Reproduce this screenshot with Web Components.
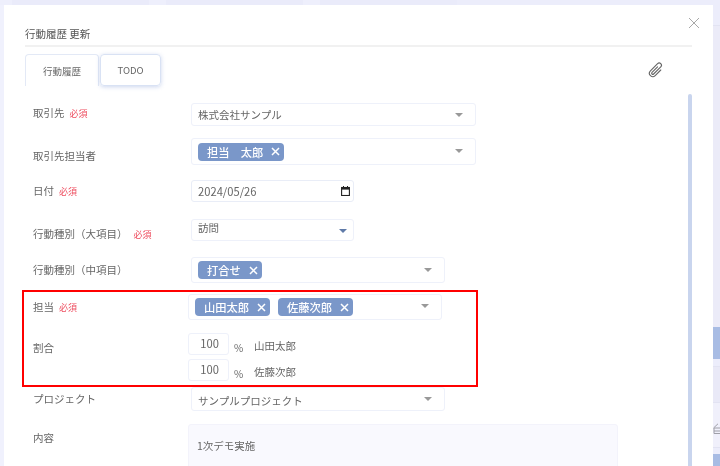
<!DOCTYPE html>
<html lang="ja">
<head>
<meta charset="utf-8">
<title>行動履歴 更新</title>
<style>
html,body{margin:0;padding:0;height:466px;overflow:hidden;background:#ecedfb}
body{font-family:"Noto Sans CJK JP","Noto Sans",sans-serif;color:#666}
</style>
</head>
<body>
<modal-page>
  <span slot="title">行動履歴 更新</span>

  <form-row label="取引先" req="1" style="--h:35px;--lt:3px">
    <pick-box style="--w:285px;--bh:23px"><span class="t">株式会社サンプル</span></pick-box>
  </form-row>
  <form-row label="取引先担当者" style="--h:42px;--lt:11px">
    <pick-box style="--w:285px;--bh:27px;--pad:6px;--at:-1px"><tag-pill>担当　太郎</tag-pill></pick-box>
  </form-row>
  <form-row label="日付" req="1" style="--h:39px;--lt:4px">
    <date-box>2024/05/26</date-box>
  </form-row>
  <form-row label="行動種別（大項目）" req="1" req-gap="6" style="--h:38px;--lt:8px">
    <pick-box style="--w:163px;--bh:22px;--ac:#5f7aa8;--tt:-3px;--at:1px;--ar:6px">訪問</pick-box>
  </form-row>
  <form-row label="行動種別（中項目）" style="--h:33px;--lt:6px">
    <pick-box style="--w:254px;--bh:26px;--pad:6px"><tag-pill>打合せ</tag-pill></pick-box>
  </form-row>

  <mark-box>
    <form-row label="担当" req="1" style="--h:39px;--lt:6px;--lw:155px">
      <pick-box style="--w:254px;--bh:26px;--pad:6px;--gap:8px;--at:-1px"><tag-pill>山田太郎</tag-pill><tag-pill>佐藤次郎</tag-pill></pick-box>
    </form-row>
    <form-row label="割合" style="--h:54px;--lt:8px;--lw:155px">
      <rate-list>
        <rate-line name="山田太郎">100</rate-line>
        <rate-line name="佐藤次郎">100</rate-line>
      </rate-list>
    </form-row>
  </mark-box>

  <form-row label="プロジェクト" style="--h:37px;--lt:5px">
    <pick-box style="--w:254px;--bh:24px;--tt:1px">サンプルプロジェクト</pick-box>
  </form-row>
  <form-row label="内容" style="--h:60px;--lt:7px;--lw:155px">
    <memo-box>1次デモ実施</memo-box>
  </form-row>
</modal-page>

<script>
const modalTpl = document.createElement('template');
modalTpl.innerHTML = `<style>
:host{display:grid;grid-template-columns:4px 709px 7px;grid-template-rows:5px 461px;width:720px;height:466px;overflow:hidden;filter:blur(.3px)}
.top{grid-column:1 / 4;display:flex;background:#ecedfb}
.top i{display:block;height:5px;background:#eeeffc}
.left{background:#f0f1fd}
.right{display:flex;flex-direction:column;background:#ecedfb;overflow:hidden}
.right i{display:block;flex:none}
.right svg{display:block;width:7px;height:11px;margin-top:20px}
.modal{position:relative;background:#fff;padding:21px 21px 0;box-sizing:border-box;overflow:hidden}
.title{height:16px;line-height:16px;font-size:10.5px;color:#555;padding-bottom:3px;border-bottom:2px solid #f1f1f1;width:667px}
.close{position:absolute;left:685px;top:13px;width:10px;height:10px}
.bar{display:flex;align-items:flex-start;justify-content:space-between;width:667px;margin-top:7px;height:32px}
.tabs{display:flex;gap:1px}
.tab{height:32px;box-sizing:border-box;display:flex;align-items:center;justify-content:center;font-size:9.5px;color:#666;border:1px solid #e3e9f6;border-radius:4px}
.tab.on{width:74px;border-bottom:none;border-radius:4px 4px 0 0}
.tab.off{width:61px;border-color:#d9e2f4;box-shadow:0 1px 4px rgba(130,155,215,.4)}
.clip{width:18px;height:18px;margin:7px 27px 0 0;transform:rotate(45deg)}
.body{display:flex;justify-content:space-between;width:667px;margin-top:8px}
.form{padding:9px 0 0 8px;width:650px;box-sizing:border-box}
.thumb{width:4px;height:380px;background:#c9d5ee;border-radius:2px 2px 0 0}
</style>
<div class="top">
  <i style="width:12px"></i><i style="width:137px;background:#eaebfa"></i><i style="width:17px"></i><i style="width:137px;background:#eaebfa"></i><i style="width:17px"></i><i style="width:137px;background:#eaebfa"></i>
</div>
<div class="left"></div>
<div class="modal">
  <div class="title"><slot name="title"></slot></div>
  <svg class="close" viewBox="0 0 10 10" fill="none" stroke="#a8a8a8" stroke-width="1"><path d="M0 0l10 10M10 0L0 10"/></svg>
  <div class="bar">
    <div class="tabs"><div class="tab on">行動履歴</div><div class="tab off">TODO</div></div>
    <svg class="clip" viewBox="0 0 16 16" fill="#666"><path d="M4.5 3a2.5 2.5 0 0 1 5 0v9a1.5 1.5 0 0 1-3 0V5a.5.5 0 0 1 1 0v7a.5.5 0 0 0 1 0V3a1.5 1.5 0 1 0-3 0v9a2.5 2.5 0 0 0 5 0V5a.5.5 0 0 1 1 0v7a3.5 3.5 0 1 1-7 0V3z"/></svg>
  </div>
  <div class="body">
    <div class="form"><slot></slot></div>
    <div class="thumb"></div>
  </div>
</div>
<div class="right">
  <i style="height:20px"></i><i style="height:1px;background:#e2e3f2"></i>
  <i style="height:301px;background:#ebebf8"></i>
  <i style="height:32px;background:#a8bce4"></i>
  <i style="height:7px"></i><i style="height:1px;background:#e2e3f2"></i>
  <i style="height:35px;background:#e9e9f7"></i><i style="height:1px;background:#e2e3f2"></i>
  <i style="height:44px;background:#f0f0fb"><svg viewBox="0 0 7 11" fill="none" stroke="#a0a0a8"><path d="M.5 5L5 .8M1 5h6M1 5v5.5h6M1 8h6"/></svg></i>
  <i style="height:1px;background:#e2e3f2"></i>
  <i style="height:6px"></i>
  <i style="height:20px;background:#a8bce4"></i>
</div>`;
class ModalPage extends HTMLElement {
    constructor() {
        super()
        this.attachShadow({ mode: 'open' }).appendChild(modalTpl.content.cloneNode(true))
    }
}
customElements.define('modal-page', ModalPage)

class FormRow extends HTMLElement {
    constructor() {
        super()
        let shadow = this.attachShadow({ mode: 'open' })
        let req = this.hasAttribute('req')
        let gap = this.getAttribute('req-gap') || 5
        shadow.innerHTML = `<style>
:host{display:flex;height:var(--h,36px);font-size:10.5px;color:#666}
.label{flex:none;width:var(--lw,158px);padding-top:var(--lt,0);line-height:14px;box-sizing:border-box;white-space:nowrap}
.req{font-size:9px;color:#ee4d5f;margin-left:${gap}px}
.ctl{flex:none}
</style>
<div class="label">${this.getAttribute('label')}${req ? '<span class="req">必須</span>' : ''}</div>
<div class="ctl"><slot></slot></div>`
    }
}
customElements.define('form-row', FormRow)

class PickBox extends HTMLElement {
    constructor() {
        super()
        this.attachShadow({ mode: 'open' }).innerHTML = `<style>
:host{display:block;width:var(--w);height:var(--bh);box-sizing:border-box;border:1px solid #eef1fa;border-radius:3px;background:#fff;font-size:10.5px;color:#666}
.in{display:flex;align-items:center;justify-content:space-between;height:100%;padding:0 var(--ar,12px) 0 var(--pad,6px)}
.val{display:flex;gap:var(--gap,8px);align-items:center;position:relative;top:var(--tt,0);white-space:nowrap}
.arrow{width:0;height:0;border:4.5px solid transparent;border-top:4.5px solid var(--ac,#999);border-bottom:0;position:relative;top:var(--at,0)}
</style>
<div class="in"><div class="val"><slot></slot></div><div class="arrow"></div></div>`
    }
}
customElements.define('pick-box', PickBox)

class TagPill extends HTMLElement {
    constructor() {
        super()
        this.attachShadow({ mode: 'open' }).innerHTML = `<style>
:host{display:inline-flex;align-items:center;height:18px;padding:0 4px 0 9px;border-radius:4px;background:#7a97c9;color:#fff;font-size:11.25px;font-weight:500;white-space:nowrap}
svg{width:9px;height:9px;margin-left:8px}
</style><slot></slot><svg viewBox="0 0 9 9" fill="none" stroke="#fff" stroke-width="1.5"><path d="M1 1l7 7M8 1L1 8"/></svg>`
    }
}
customElements.define('tag-pill', TagPill)

class DateBox extends HTMLElement {
    constructor() {
        super()
        this.attachShadow({ mode: 'open' }).innerHTML = `<style>
:host{display:flex;align-items:center;justify-content:space-between;width:163px;height:22px;box-sizing:border-box;border:1px solid #e9edf7;border-radius:3px;padding:0 3px 0 6px;font-size:11.2px;color:#666}
svg{width:9px;height:10px}
</style><slot></slot><svg viewBox="0 0 9 10" fill="none" stroke="#222"><rect x=".6" y="1.5" width="7.8" height="8" stroke-width="1.1"/><path d="M.6 2.6h7.8" stroke-width="2"/><path d="M2.5 0v2M6.5 0v2" stroke-width="1"/></svg>`
    }
}
customElements.define('date-box', DateBox)

class MarkBox extends HTMLElement {
    constructor() {
        super()
        this.attachShadow({ mode: 'open' }).innerHTML = `<style>
:host{display:block;width:456px;height:97px;box-sizing:border-box;margin-left:-11px;border:2px solid #f00;padding:2px 0 0 9px}
</style><slot></slot>`
    }
}
customElements.define('mark-box', MarkBox)

class RateList extends HTMLElement {
    constructor() {
        super()
        this.attachShadow({ mode: 'open' }).innerHTML = `<style>
:host{display:flex;flex-direction:column;gap:4px}
</style><slot></slot>`
    }
}
customElements.define('rate-list', RateList)

class RateLine extends HTMLElement {
    constructor() {
        super()
        this.attachShadow({ mode: 'open' }).innerHTML = `<style>
:host{display:flex;align-items:center;height:22px;font-size:10.5px;color:#666;white-space:nowrap}
.num{width:41px;height:22px;box-sizing:border-box;border:1px solid #eef1fa;border-radius:3px;text-align:right;padding-right:9px;line-height:19px;font-size:11.2px}
.pct{margin-left:5px;width:20px;padding-top:6px;font-size:10px;box-sizing:border-box}
.name{font-size:10.5px;padding-top:2px}
</style><div class="num"><slot></slot></div><div class="pct">%</div><div class="name">${this.getAttribute('name')}</div>`
    }
}
customElements.define('rate-line', RateLine)

class MemoBox extends HTMLElement {
    constructor() {
        super()
        this.attachShadow({ mode: 'open' }).innerHTML = `<style>
:host{display:block;width:430px;height:60px;box-sizing:border-box;background:#f9f9fe;border:1px solid #f3f3fb;border-radius:3px;padding:13px 8px;font-size:10.5px;line-height:15px;color:#666}
</style><slot></slot>`
    }
}
customElements.define('memo-box', MemoBox)
</script>
</body>
</html>
